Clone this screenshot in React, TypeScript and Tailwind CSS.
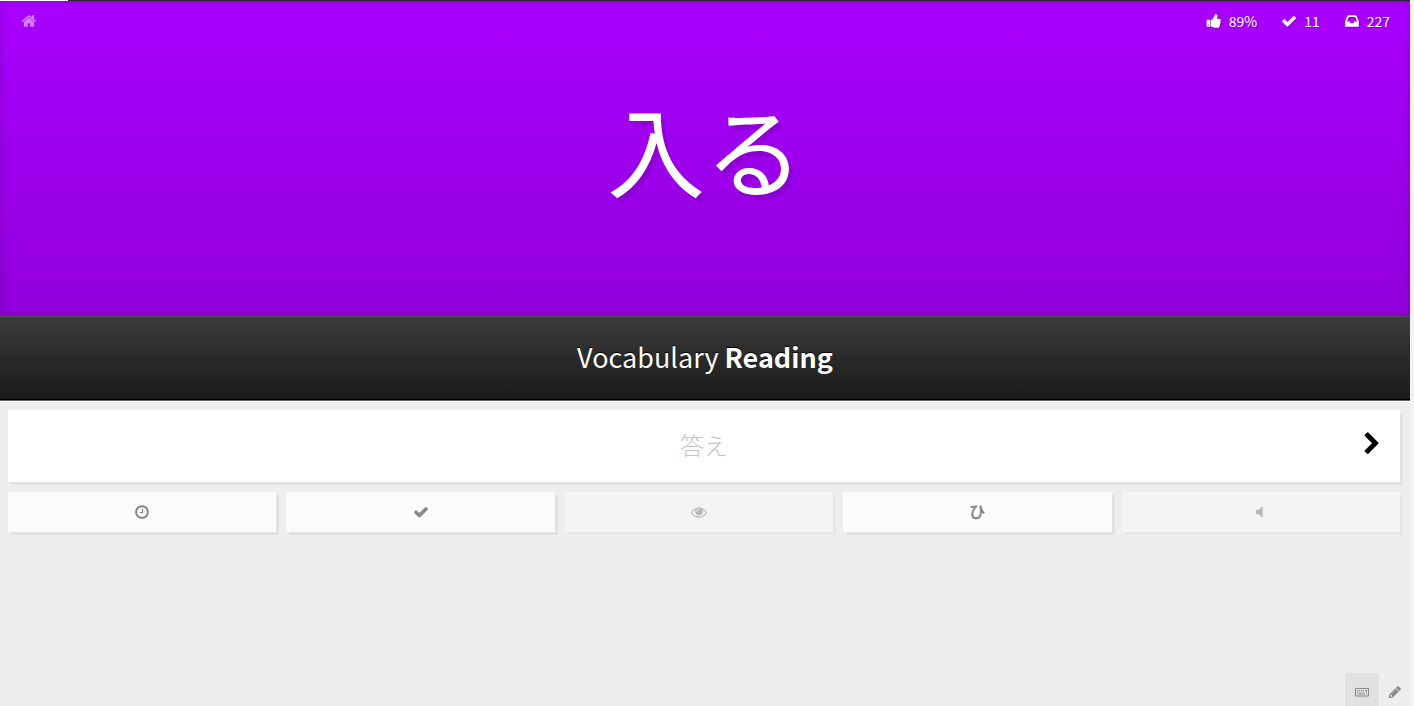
import { ReactNode } from 'react'
import clsx from 'clsx'

const icons = {
  home: 'M1472 992v480q0 26-19 45t-45 19h-384v-384h-256v384h-384q-26 0-45-19t-19-45v-480q0-1 .5-3t.5-3l575-474 575 474q1 2 1 6zm223-69l-62 74q-8 9-21 11h-3q-13 0-21-7l-692-577-692 577q-12 8-24 7-13-2-21-11l-62-74q-8-10-7-23.5t11-21.5l719-599q32-26 76-26t76 26l244 204v-195q0-14 9-23t23-9h192q14 0 23 9t9 23v408l219 182q10 8 11 21.5t-7 23.5z',
  thumbsUp:
    'M320 1344q0-26-19-45t-45-19q-27 0-45.5 19t-18.5 45q0 27 18.5 45.5t45.5 18.5q26 0 45-18.5t19-45.5zm160-512v640q0 26-19 45t-45 19h-288q-26 0-45-19t-19-45v-640q0-26 19-45t45-19h288q26 0 45 19t19 45zm1184 0q0 86-55 149 15 44 15 76 3 76-43 137 17 56 0 117-15 57-54 94 9 112-49 181-64 76-197 78h-129q-66 0-144-15.5t-121.5-29-120.5-39.5q-123-43-158-44-26-1-45-19.5t-19-44.5v-641q0-25 18-43.5t43-20.5q24-2 76-59t101-121q68-87 101-120 18-18 31-48t17.5-48.5 13.5-60.5q7-39 12.5-61t19.5-52 34-50q19-19 45-19 46 0 82.5 10.5t60 26 40 40.5 24 45 12 50 5 45 .5 39q0 38-9.5 76t-19 60-27.5 56q-3 6-10 18t-11 22-8 24h277q78 0 135 57t57 135z',
  check:
    'M1671 566q0 40-28 68l-724 724-136 136q-28 28-68 28t-68-28l-136-136-362-362q-28-28-28-68t28-68l136-136q28-28 68-28t68 28l294 295 656-657q28-28 68-28t68 28l136 136q28 28 28 68z',
  inbox:
    'M1151 960h316q-1-3-2.5-8t-2.5-8l-212-496h-708l-212 496q-1 2-2.5 8t-2.5 8h316l95 192h320zm513 30v482q0 26-19 45t-45 19h-1408q-26 0-45-19t-19-45v-482q0-62 25-123l238-552q10-25 36.5-42t52.5-17h832q26 0 52.5 17t36.5 42l238 552q25 61 25 123z',
  chevronRight:
    'M1363 877l-742 742q-19 19-45 19t-45-19l-166-166q-19-19-19-45t19-45l531-531-531-531q-19-19-19-45t19-45l166-166q19-19 45-19t45 19l742 742q19 19 19 45t-19 45z',
  clock:
    'M1024 544v448q0 14-9 23t-23 9h-320q-14 0-23-9t-9-23v-64q0-14 9-23t23-9h224v-352q0-14 9-23t23-9h64q14 0 23 9t9 23zm416 352q0-148-73-273t-198-198-273-73-273 73-198 198-73 273 73 273 198 198 273 73 273-73 198-198 73-273zm224 0q0 209-103 385.5t-279.5 279.5-385.5 103-385.5-103-279.5-279.5-103-385.5 103-385.5 279.5-279.5 385.5-103 385.5 103 279.5 279.5 103 385.5z',
  eye: 'M1664 960q-152-236-381-353 61 104 61 225 0 185-131.5 316.5t-316.5 131.5-316.5-131.5-131.5-316.5q0-121 61-225-229 117-381 353 133 205 333.5 326.5t434.5 121.5 434.5-121.5 333.5-326.5zm-720-384q0-20-14-34t-34-14q-125 0-214.5 89.5t-89.5 214.5q0 20 14 34t34 14 34-14 14-34q0-86 61-147t147-61q20 0 34-14t14-34zm848 384q0 34-20 69-140 230-376.5 368.5t-499.5 138.5-499.5-139-376.5-368q-20-35-20-69t20-69q140-229 376.5-368t499.5-139 499.5 139 376.5 368q20 35 20 69z',
  volume:
    'M1088 352v1088q0 26-19 45t-45 19-45-19l-333-333h-262q-26 0-45-19t-19-45v-384q0-26 19-45t45-19h262l333-333q19-19 45-19t45 19 19 45z',
  keyboard:
    'M128 384h1536q53 0 90 37t37 91v832q0 53-37 90t-90 38h-1536q-53 0-90-38t-38-90v-832q0-53 38-91t90-37zm0 128v832h1536v-832zM256 640h128v128h-128zM512 640h128v128h-128zM768 640h128v128h-128zM1024 640h128v128h-128zM1280 640h256v320h-128v-192h-128zM256 864h192v128h-192zM576 864h128v128h-128zM832 864h128v128h-128zM1088 864h128v128h-128zM256 1088h128v128h-128zM512 1088h768v128h-768zM1408 1088h128v128h-128z',
  pencil:
    'M491 1536l91-91-235-235-91 91v107h128v128h107zm523-928q0-22-22-22-10 0-17 7l-542 542q-7 7-7 17 0 22 22 22 10 0 17-7l542-542q7-7 7-17zm-54-192l416 416-832 832h-416v-416zm683 96q0 53-37 90l-166 166-416-416 166-165q36-38 90-38 53 0 91 38l235 234q37 39 37 91z',
}

interface IIconProps {
  name: keyof typeof icons
  className?: string
}

function Icon({ name, className = 'size-4' }: IIconProps) {
  return (
    <svg viewBox="0 0 1792 1792" fill="currentColor" fillRule="evenodd" aria-hidden="true" className={className}>
      <path d={icons[name]} />
    </svg>
  )
}

interface IStatProps {
  icon: keyof typeof icons
  label: string
  value: string
}

function Stat({ icon, label, value }: IStatProps) {
  return (
    <li className="flex items-center gap-[7px]" title={label}>
      <Icon name={icon} className="size-4 drop-shadow-[1px_1px_0_rgba(0,0,0,0.2)]" />
      <span>{value}</span>
    </li>
  )
}

interface IToolButtonProps {
  label: string
  disabled?: boolean
  children: ReactNode
}

function ToolButton({ label, disabled, children }: IToolButtonProps) {
  return (
    <li className="w-1/5 pr-[10px] last:pr-0">
      <button
        type="button"
        aria-label={label}
        disabled={disabled}
        className={clsx(
          'flex h-10 w-full items-center justify-center bg-[#fbfbfb] text-[#888] shadow-[3px_3px_0_#e1e1e1]',
          disabled && 'opacity-50',
        )}
      >
        {children}
      </button>
    </li>
  )
}

export default function App() {
  return (
    <div className="flex min-h-screen flex-col border-r-4 border-[#f2f2f2] bg-[#eee] font-['Noto_Sans_CJK_JP',sans-serif]">
      <div className="h-px bg-[#2c2338]">
        <div className="h-px w-[68px] bg-white" />
      </div>

      <header className="flex h-[315px] flex-col bg-linear-to-b from-[#a900fe] to-[#9100db] text-white shadow-[inset_0_0_6px_rgba(0,0,0,0.2)]">
        <div className="flex h-10 items-center justify-between pr-5 pl-[21px]">
          <a href="#home" aria-label="Home" className="text-white/50">
            <Icon name="home" />
          </a>
          <ul className="flex gap-6 text-sm [text-shadow:1px_1px_0_rgba(0,0,0,0.2)]">
            <Stat icon="thumbsUp" label="Correct rate" value="89%" />
            <Stat icon="check" label="Completed" value="11" />
            <Stat icon="inbox" label="Remaining" value="227" />
          </ul>
        </div>
        <div
          lang="ja"
          className="pt-8 text-center text-[98px] leading-[148px] [text-shadow:4px_5px_0_rgba(0,0,0,0.1)]"
        >
          入る
        </div>
      </header>

      <h1 className="flex h-[84px] items-center justify-center border-t border-b border-t-[#505050] border-b-black bg-linear-to-b from-[#3c3c3c] to-[#1a1a1a] pb-[2px] text-[27px] text-white shadow-[0_1px_0_#666,0_2px_0_#fff] [text-shadow:0_-1px_0_#000]">
        <span>
          Vocabulary <strong className="font-bold">Reading</strong>
        </span>
      </h1>

      <main className="pt-[10px] pr-[10px] pl-2">
        <form className="flex h-[72px] items-center bg-white pb-1 pl-14 shadow-[3px_3px_0_#e1e1e1]">
          <input
            type="text"
            lang="ja"
            aria-label="答え"
            placeholder="答え"
            className="h-full min-w-0 flex-1 bg-transparent text-center text-2xl font-light outline-none placeholder:text-[#c4c4c4]"
          />
          <button type="submit" aria-label="Submit" className="flex h-full w-14 items-center justify-center">
            <Icon name="chevronRight" className="size-6" />
          </button>
        </form>
        <ul className="mt-[10px] flex">
          <ToolButton label="Last items">
            <Icon name="clock" />
          </ToolButton>
          <ToolButton label="Wrap up">
            <Icon name="check" />
          </ToolButton>
          <ToolButton label="Item info" disabled>
            <Icon name="eye" />
          </ToolButton>
          <ToolButton label="Kana chart">
            <span lang="ja" className="pb-[2px] text-base font-bold">
              ひ
            </span>
          </ToolButton>
          <ToolButton label="Play audio" disabled>
            <Icon name="volume" />
          </ToolButton>
        </ul>
      </main>

      <footer className="mt-auto flex justify-end text-[#888]">
        <button
          type="button"
          aria-label="Hotkeys"
          className="flex h-[33px] w-[34px] items-center justify-center rounded-t-sm bg-[#e1e1e1] pt-1"
        >
          <Icon name="keyboard" className="size-[14px]" />
        </button>
        <button type="button" aria-label="Edit" className="flex h-[33px] w-[31px] items-center justify-center pt-1">
          <Icon name="pencil" className="size-[14px]" />
        </button>
      </footer>
    </div>
  )
}
